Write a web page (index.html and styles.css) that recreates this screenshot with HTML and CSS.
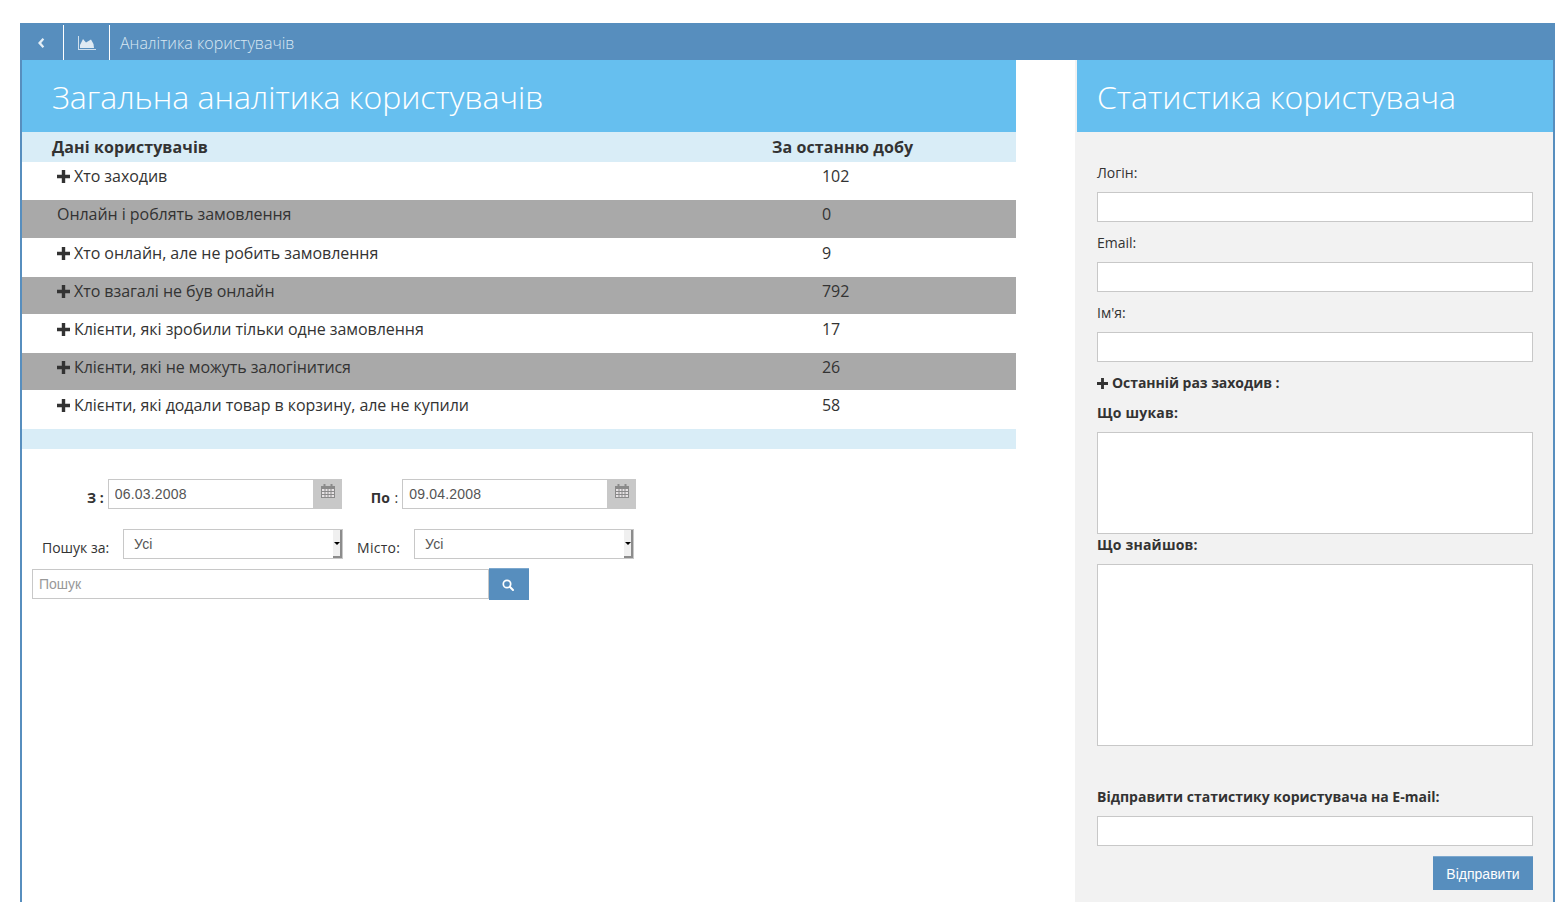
FILE: index.html
```html
<!DOCTYPE html>
<html lang="uk">
<head>
    <meta charset="UTF-8">
    <title>Аналітика користувачів</title>
    <link rel="stylesheet" href="styles.css">
</head>
<body>
<div class="page">
    <div class="topbar">
        <a class="topbar-btn back-btn">
            <svg width="9" height="12" viewBox="0 0 9 12"><path d="M6.600 1 2 6l4.600 5L8.200 9.400 5.200 6l3-3.400z" fill="#e4eef6"/></svg>
        </a>
        <a class="topbar-btn chart-btn">
            <svg width="18" height="14" viewBox="0 0 18 14"><path d="M0 0h1v13h17v1H0z" fill="#cfe0ee"/><path d="M2 12V9l3-6 3 3.500L10.500 5 13 3.500 15.500 8l.5 4z" fill="#dfeaf3"/></svg>
        </a>
        <span class="topbar-title">Аналітика користувачів</span>
    </div>
    <div class="content">
        <div class="main">
            <h1 class="panel-title main-title">Загальна аналітика користувачів</h1>
            <table class="stats">
                <thead>
                    <tr><th class="col-name">Дані користувачів</th><th class="col-day">За останню добу</th></tr>
                </thead>
                <tbody>
                    <tr><td class="name"><svg class="plus" viewBox="0 0 13 13"><path d="M4.800 0h3.400v4.800H13v3.400H8.200V13H4.800V8.200H0V4.800h4.800z"/></svg>Хто заходив</td><td class="num">102</td></tr>
                    <tr class="dark"><td class="name">Онлайн і роблять замовлення</td><td class="num">0</td></tr>
                    <tr class="tall"><td class="name"><svg class="plus" viewBox="0 0 13 13"><path d="M4.800 0h3.400v4.800H13v3.400H8.200V13H4.800V8.200H0V4.800h4.800z"/></svg>Хто онлайн, але не робить замовлення</td><td class="num">9</td></tr>
                    <tr class="dark short"><td class="name"><svg class="plus" viewBox="0 0 13 13"><path d="M4.800 0h3.400v4.800H13v3.400H8.200V13H4.800V8.200H0V4.800h4.800z"/></svg>Хто взагалі не був онлайн</td><td class="num">792</td></tr>
                    <tr class="tall"><td class="name"><svg class="plus" viewBox="0 0 13 13"><path d="M4.800 0h3.400v4.800H13v3.400H8.200V13H4.800V8.200H0V4.800h4.800z"/></svg>Клієнти, які зробили тільки одне замовлення</td><td class="num">17</td></tr>
                    <tr class="dark short"><td class="name"><svg class="plus" viewBox="0 0 13 13"><path d="M4.800 0h3.400v4.800H13v3.400H8.200V13H4.800V8.200H0V4.800h4.800z"/></svg>Клієнти, які не можуть залогінитися</td><td class="num">26</td></tr>
                    <tr class="tall"><td class="name"><svg class="plus" viewBox="0 0 13 13"><path d="M4.800 0h3.400v4.800H13v3.400H8.200V13H4.800V8.200H0V4.800h4.800z"/></svg>Клієнти, які додали товар в корзину, але не купили</td><td class="num">58</td></tr>
                </tbody>
            </table>
            <div class="stats-foot"></div>

            <div class="filters">
                <div class="filter-row date-row">
                    <label class="date-label from-label"><b>З</b> <b>:</b></label>
                    <div class="date-group">
                        <input class="date-input" type="text" value="06.03.2008">
                        <span class="date-addon"><svg width="14" height="14" viewBox="0 0 14 14"><path fill="#8a8a8a" d="M2.500 0h2v2h5V0h2v2H14v12H0V2h2.500z"/><path fill="#e6e2e4" d="M1 5h2.500v2H1zm3.500 0H6.500v2h-2zm3 0h2v2h-2zm3 0H13v2h-2.500zM1 8h2.500v2H1zm3.500 0h2v2h-2zm3 0h2v2h-2zm3 0H13v2h-2.500zM1 11h2.500v2H1zm3.500 0h2v2h-2zm3 0h2v2h-2zm3 0H13v2h-2.500z"/></svg></span>
                    </div>
                    <label class="date-label to-label"><b>По</b> :</label>
                    <div class="date-group">
                        <input class="date-input" type="text" value="09.04.2008">
                        <span class="date-addon"><svg width="14" height="14" viewBox="0 0 14 14"><path fill="#8a8a8a" d="M2.500 0h2v2h5V0h2v2H14v12H0V2h2.500z"/><path fill="#e6e2e4" d="M1 5h2.500v2H1zm3.500 0H6.500v2h-2zm3 0h2v2h-2zm3 0H13v2h-2.500zM1 8h2.500v2H1zm3.500 0h2v2h-2zm3 0h2v2h-2zm3 0H13v2h-2.500zM1 11h2.500v2H1zm3.500 0h2v2h-2zm3 0h2v2h-2zm3 0H13v2h-2.500z"/></svg></span>
                    </div>
                </div>
                <div class="filter-row select-row">
                    <label class="select-label by-label">Пошук за:</label>
                    <div class="fake-select by-select"><span class="fake-value">Усі</span><span class="fake-arrow"></span></div>
                    <label class="select-label city-label">Місто:</label>
                    <div class="fake-select city-select"><span class="fake-value">Усі</span><span class="fake-arrow"></span></div>
                </div>
                <div class="search-row">
                    <input class="search-input" type="text" placeholder="Пошук">
                    <button class="search-btn" type="button">
                        <svg width="12" height="12" viewBox="0 0 12 12"><circle cx="5" cy="5" r="3.700" fill="none" stroke="#fff" stroke-width="1.700"/><path d="M7.800 7.800 11 11" stroke="#fff" stroke-width="2" stroke-linecap="round"/></svg>
                    </button>
                </div>
            </div>
        </div>

        <div class="side">
            <h2 class="panel-title side-title">Статистика користувача</h2>
            <div class="side-form">
                <label class="side-label">Логін:</label>
                <input class="side-input" type="text">
                <label class="side-label">Email:</label>
                <input class="side-input" type="text">
                <label class="side-label">Ім'я:</label>
                <input class="side-input" type="text">
                <div class="side-label strong last-visit"><svg class="plus small" viewBox="0 0 13 13"><path d="M4.800 0h3.400v4.800H13v3.400H8.200V13H4.800V8.200H0V4.800h4.800z"/></svg>Останній раз заходив :</div>
                <label class="side-label strong searched">Що шукав:</label>
                <textarea class="side-area area-small"></textarea>
                <label class="side-label strong found">Що знайшов:</label>
                <textarea class="side-area area-big"></textarea>
                <label class="side-label strong send-label">Відправити статистику користувача на E-mail:</label>
                <input class="side-input" type="text">
                <div class="send-row"><button class="send-btn" type="button">Відправити</button></div>
            </div>
        </div>
    </div>
</div>
</body>
</html>
```

FILE: styles.css
```css
* {
    margin: 0;
    padding: 0;
    box-sizing: border-box;
}

html, body {
    height: 100%;
    overflow: hidden;
}

body {
    background: #fff;
    padding: 23px 11px 0 20px;
    font-family: "Open Sans", "Noto Sans", sans-serif;
    font-size: 14px;
    color: #333;
}

.page {
    height: 879px;
    display: flex;
    flex-direction: column;
    border-left: 2px solid #578ebe;
    border-right: 2px solid #578ebe;
}

/* top bar */
.topbar {
    height: 37px;
    margin-left: -2px;
    margin-right: -2px;
    background: #578ebe;
    display: flex;
    align-items: stretch;
    flex-shrink: 0;
}

.topbar-btn {
    display: flex;
    align-items: center;
    justify-content: center;
    margin-top: 2px;
    border-right: 1px solid #fff;
}

.back-btn {
    width: 44px;
    padding-right: 2px;
}

.chart-btn {
    width: 46px;
}

.topbar-title {
    color: #d9e8f3;
    font-size: 16px;
    font-weight: 300;
    line-height: 40px;
    margin-left: 10px;
}

.content {
    flex: 1;
    display: flex;
}

/* left side */
.main {
    width: 994px;
    flex-shrink: 0;
}

.panel-title {
    height: 72px;
    background: #66bfef;
    color: #fff;
    font-weight: 300;
    font-size: 32px;
    line-height: 74px;
    letter-spacing: -0.03px;
}

.main-title {
    padding-left: 30px;
}

.stats {
    width: 100%;
    border-collapse: collapse;
    table-layout: fixed;
    font-size: 16px;
    letter-spacing: -0.05px;
}

.stats th {
    height: 30px;
    background: #d9edf7;
    text-align: left;
    font-weight: 700;
    font-size: 16px;
    line-height: 30px;
    letter-spacing: 0.1px;
}

.col-name {
    padding-left: 30px;
    width: 750px;
}

.stats td {
    height: 38px;
    vertical-align: top;
    line-height: 28px;
}

.stats tr.tall td {
    height: 39px;
    padding-top: 1px;
}

.stats tr.short td {
    height: 37px;
}

.stats td.name {
    padding-left: 35px;
}

.stats td.num {
    padding-left: 50px;
}

.stats tr.dark td {
    background: #a9a9a9;
}

.plus {
    width: 13px;
    height: 13px;
    fill: #333;
    margin-right: 4px;
    vertical-align: -1px;
}

.plus.small {
    width: 11px;
    height: 11px;
}

.stats-foot {
    height: 20px;
    background: #d9edf7;
}

/* filters */
.filters {
    padding-top: 30px;
}

.filter-row {
    display: flex;
    align-items: flex-start;
    height: 30px;
}

.date-label {
    line-height: 38px;
    font-size: 14px;
}

.from-label {
    margin-left: 65px;
    margin-right: 4px;
}

.to-label {
    margin-left: 29px;
    margin-right: 4px;
    word-spacing: 1px;
}

.date-group {
    display: flex;
    width: 234px;
    height: 30px;
}

.date-input {
    width: 206px;
    height: 30px;
    border: 1px solid #c8c8c8;
    padding: 0 6px;
    font: 14px "Liberation Sans", sans-serif;
    letter-spacing: 0.2px;
    color: #555;
    outline: none;
}

.date-addon {
    width: 28px;
    background: #c8c8c8;
    display: flex;
    align-items: center;
    justify-content: center;
    padding-bottom: 6px;
}

.select-row {
    margin-top: 20px;
}

.select-label {
    line-height: 38px;
    font-size: 14px;
}

.by-label {
    margin-left: 20px;
    width: 81px;
}

.city-label {
    margin-left: 14px;
    width: 57px;
    letter-spacing: 0.3px;
}

.fake-select {
    width: 220px;
    height: 30px;
    border: 1px solid #c8c8c8;
    background: #fff;
    display: flex;
    justify-content: space-between;
    font: 14px "Liberation Sans", sans-serif;
    color: #555;
}

.fake-value {
    padding-left: 10px;
    line-height: 28px;
    letter-spacing: 0.2px;
}

.fake-arrow {
    width: 9px;
    border-right: 2px solid #8c8c8c;
    border-bottom: 2px solid #8c8c8c;
    background: #f0f0f0;
    position: relative;
}

.fake-arrow::after {
    content: "";
    position: absolute;
    left: 1px;
    top: 12px;
    border-left: 3px solid transparent;
    border-right: 3px solid transparent;
    border-top: 3px solid #000;
}

.search-row {
    display: flex;
    align-items: center;
    margin-top: 9px;
    margin-left: 10px;
}

.search-input {
    width: 457px;
    height: 30px;
    border: 1px solid #c8c8c8;
    padding: 0 6px;
    font: 14px "Liberation Sans", sans-serif;
    outline: none;
}

.search-input::placeholder {
    color: #999;
}

.search-btn {
    width: 40px;
    height: 32px;
    background: #578ebe;
    border: 0;
    border-top: 1px solid #7da8ce;
    display: flex;
    align-items: center;
    justify-content: center;
    padding: 1px 2px 0 0;
}

/* right side */
.side {
    width: 478px;
    margin-left: auto;
    background: #f2f2f2;
    padding-left: 2px;
}

.side-title {
    padding-left: 20px;
}

.side-form {
    padding: 31px 20px 0;
}

.side-label {
    display: block;
    line-height: 20px;
    height: 20px;
    margin-top: 11px;
    margin-bottom: 9px;
    font-size: 14px;
}

.side-label:first-child {
    margin-top: 0;
}

.strong {
    font-weight: 700;
}

.last-visit {
    margin-top: 11px;
    margin-bottom: 0;
    letter-spacing: -0.05px;
}

.searched {
    margin-top: 10px;
    letter-spacing: 0.2px;
}

.found {
    margin-top: 1px;
    letter-spacing: 0.2px;
}

.side-input {
    display: block;
    width: 100%;
    height: 30px;
    border: 1px solid #c8c8c8;
    background: #fff;
    outline: none;
}

.side-area {
    display: block;
    width: 100%;
    border: 1px solid #c8c8c8;
    background: #fff;
    outline: none;
    resize: none;
}

.area-small {
    height: 102px;
}

.area-big {
    height: 182px;
}

.send-label {
    margin-top: 41px;
}

.send-row {
    display: flex;
    justify-content: flex-end;
    margin-top: 10px;
}

.send-btn {
    width: 100px;
    height: 34px;
    background: #578ebe;
    border: 0;
    border-top: 1px solid #7da8ce;
    color: #fff;
    font: 14px "Liberation Sans", sans-serif;
}
```
